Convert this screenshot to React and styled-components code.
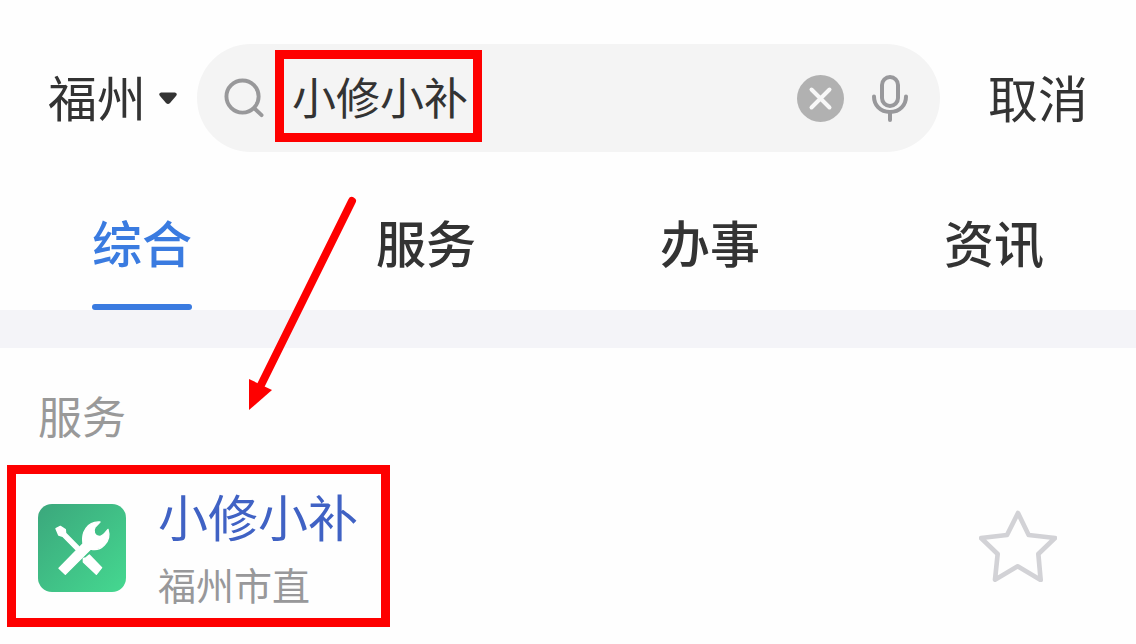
import React, { useState } from "react";
import styled, { createGlobalStyle } from "styled-components";

const tabs = ["综合", "服务", "办事", "资讯"];

export const SearchPage = () => {
  const [query, setQuery] = useState("小修小补");
  const [active, setActive] = useState("综合");

  return (
    <Page>
      <Header>
        <CityButton type="button">
          <span>福州</span>
          <Caret viewBox="0 0 18 12" aria-hidden="true">
            <path d="M2 0.500H16Q19 1.500 17 4L11 11Q9 13 7 11L1 4Q-1 1.500 2 0.500Z" />
          </Caret>
        </CityButton>
        <SearchBox>
          <SearchIcon viewBox="0 0 41 41" aria-hidden="true">
            <circle cx="19" cy="19" r="16.500" />
            <path d="M31 31L38.500 38" />
          </SearchIcon>
          <Field>
            <SearchInput
              type="text"
              aria-label="搜索"
              value={query}
              onChange={e => setQuery(e.target.value)}
            />
            <QueryFrame />
          </Field>
          <IconButton type="button" aria-label="清除" onClick={() => setQuery("")}>
            <svg width="47" height="47" viewBox="0 0 47 47">
              <circle cx="23.500" cy="23.500" r="23.500" fill="#b1b1b1" />
              <path
                d="M14.500 14.500L32.500 32.500M32.500 14.500L14.500 32.500"
                stroke="#f8f8f8"
                strokeWidth="4"
                strokeLinecap="round"
              />
            </svg>
          </IconButton>
          <IconButton type="button" aria-label="语音">
            <svg width="36" height="48" viewBox="0 0 36 48" fill="none" stroke="#98989b">
              <rect x="10" y="3" width="16" height="29" rx="8" strokeWidth="4" />
              <path
                d="M2 22.500C2 31 8 38 18 38S34 31 34 22.500M18 38V46"
                strokeWidth="4"
                strokeLinecap="round"
              />
            </svg>
          </IconButton>
        </SearchBox>
        <CancelButton type="button">取消</CancelButton>
      </Header>

      <Tabs>
        {tabs.map(name => (
          <Tab
            key={name}
            type="button"
            $active={name === active}
            onClick={() => setActive(name)}
          >
            <TabLabel $active={name === active}>{name}</TabLabel>
          </Tab>
        ))}
      </Tabs>

      <Results>
        <Heading>服务</Heading>
        <Row>
          <ResultLink href="#result">
            <ToolIcon />
            <ResultText>
              <Title>小修小补</Title>
              <Subtitle>福州市直</Subtitle>
            </ResultText>
          </ResultLink>
          <IconButton type="button" aria-label="收藏">
            <svg width="78" height="72" viewBox="29 30 234 216" fill="none">
              <path
                d="M146 39L178 105L257 114L207 162L214 240L145 199L77 239L85 162L35 114L113 105Z"
                stroke="#d2d2d6"
                strokeWidth="14"
                strokeLinejoin="round"
              />
            </svg>
          </IconButton>
        </Row>
      </Results>

      <Arrow viewBox="0 0 110 220" aria-hidden="true">
        <path d="M105 6L14 190" stroke="#fe0000" strokeWidth="8" strokeLinecap="round" />
        <path d="M2 184L25 195L2 215Z" fill="#fe0000" />
      </Arrow>
    </Page>
  );
};

const ToolIcon = () => (
  <svg width="88" height="88" viewBox="24 24 264 264" aria-hidden="true">
    <defs>
      <linearGradient id="green" x1="0" y1="0" x2="1" y2="1">
        <stop offset="0" stopColor="#3ba77c" />
        <stop offset="1" stopColor="#45d890" />
      </linearGradient>
    </defs>
    <rect x="24" y="24" width="264" height="264" rx="42" fill="url(#green)" />
    <g fill="#fff" stroke="#fff" strokeWidth="4" strokeLinejoin="round">
      <path d="M78 98L91 91L106 101L107 112L147 152L138 161L98 121L86 117Z" />
      <path d="M87 217L159 143C153 110 172 75 210 78L195 94C188 106 194 121 208 121C220 121 225 110 234 100C246 137 211 168 182 159L106 235Z" />
      <path d="M160 187L167 186L178 177L215 215L199 235L160 198Z" />
    </g>
  </svg>
);

const GlobalStyle = createGlobalStyle`
  * {
    box-sizing: border-box;
  }

  body {
    margin: 0;
    background: #fefefe;
    color: #333;
    font-family: "Noto Sans CJK SC", sans-serif;
  }

  button,
  input {
    padding: 0;
    border: 0;
    background: none;
    color: inherit;
    font-family: inherit;
  }

  svg {
    display: block;
    flex-shrink: 0;
  }
`;

const Page = styled.div`
  position: relative;
`;

const Header = styled.header`
  display: flex;
  align-items: center;
  padding: 44px 48px 0;
`;

const CityButton = styled.button`
  display: flex;
  align-items: center;
  gap: 13px;
  margin-right: 20px;
  font-size: 49px;
  line-height: 72px;
  white-space: nowrap;

  span {
    padding-bottom: 4px;
  }
`;

const Caret = styled.svg`
  width: 18px;
  height: 12px;
  fill: #333;
`;

const SearchBox = styled.div`
  display: flex;
  flex: 1;
  align-items: center;
  gap: 28px;
  min-width: 0;
  height: 108px;
  padding: 0 32px 0 27px;
  border-radius: 54px;
  background: #f4f4f4;
`;

const SearchIcon = styled.svg`
  width: 40px;
  height: 40px;
  fill: none;
  stroke: #98989a;
  stroke-width: 4;
  stroke-linecap: round;
`;

const Field = styled.div`
  position: relative;
  flex: 1;
  min-width: 0;
`;

const SearchInput = styled.input`
  display: block;
  width: 100%;
  height: 64px;
  padding-bottom: 4px;
  outline: none;
  font-size: 44px;
  line-height: 60px;
`;

const QueryFrame = styled.span`
  position: absolute;
  top: -16px;
  left: -17px;
  width: 207px;
  height: 92px;
  border: 9px solid #fe0000;
  pointer-events: none;
`;

const IconButton = styled.button`
  flex-shrink: 0;
  cursor: pointer;
`;

const CancelButton = styled.button`
  margin-left: 48px;
  padding-bottom: 4px;
  font-size: 50px;
  line-height: 72px;
  white-space: nowrap;
`;

const Tabs = styled.nav`
  display: flex;
  padding-top: 53px;
  border-bottom: 38px solid #f4f4f8;
`;

const Tab = styled.button`
  display: flex;
  flex: 1;
  justify-content: center;
  color: ${props => (props.$active ? "#3a7be0" : "#333")};
  font-size: 50px;
  font-weight: 500;
  line-height: 72px;
`;

const TabLabel = styled.span`
  &::after {
    content: "";
    display: block;
    height: 6px;
    margin-top: 27px;
    border-radius: 3px;
    background: ${props => (props.$active ? "#3a7be0" : "transparent")};
  }
`;

const Results = styled.main`
  padding-top: 35px;
`;

const Heading = styled.h2`
  margin: 0 0 18px;
  padding-left: 38px;
  color: #999;
  font-size: 44px;
  font-weight: 400;
  line-height: 64px;
`;

const Row = styled.div`
  display: flex;
  align-items: center;
  justify-content: space-between;
  padding: 0 79px 0 7px;
`;

const ResultLink = styled.a`
  display: flex;
  align-items: center;
  gap: 32px;
  padding: 5px 23px 10px 22px;
  border: 9px solid #fe0000;
  text-decoration: none;

  svg {
    margin-top: 8px;
  }
`;

const ResultText = styled.span`
  display: flex;
  flex-direction: column;
  gap: 9px;
`;

const Title = styled.span`
  color: #4062c4;
  font-size: 50px;
  line-height: 72px;
`;

const Subtitle = styled.span`
  color: #98989a;
  font-size: 38px;
  line-height: 48px;
`;

const Arrow = styled.svg`
  position: absolute;
  top: 195px;
  left: 247px;
  width: 110px;
  height: 220px;
  fill: none;
  pointer-events: none;
`;

const App = () => (
  <>
    <GlobalStyle />
    <SearchPage />
  </>
);

export default App;
